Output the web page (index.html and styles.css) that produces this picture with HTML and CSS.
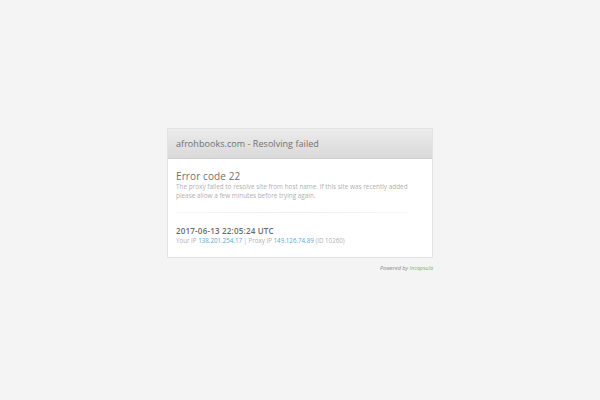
FILE: index.html
```html
<!DOCTYPE html>
<html>
<head>
<meta charset="utf-8">
<link rel="stylesheet" href="styles.css">
</head>
<body>
<div class="wrap">
  <div class="card">
    <div class="head">afrohbooks.com - Resolving failed</div>
    <div class="body">
      <div class="title">Error code 22</div>
      <div class="desc">The proxy failed to resolve site from host name. If this site was recently added please allow a few minutes before trying again.</div>
      <div class="divider"></div>
      <div class="date">2017-06-13 22:05:24 UTC</div>
      <div class="ip">Your IP <a>138.201.254.17</a> | Proxy IP <a>149.126.74.89</a> (ID 10260)</div>
    </div>
  </div>
  <div class="powered">Powered by <a class="inc">Incapsula</a></div>
</div>
</body>
</html>
```
FILE: styles.css
```css
html, body { margin: 0; padding: 0; }
body { background: #f4f4f4; width: 600px; height: 400px; font-family: "Open Sans", sans-serif; }
.wrap { width: 266px; margin: 0 auto; padding-top: 128px; }
.card { background: #fff; border: 1px solid #e3e3e3; box-sizing: border-box; }
.head { height: 30px; box-sizing: border-box; background: linear-gradient(#ececec, #d9d9d9); color: #707070; font-size: 9px; line-height: 30px; padding-left: 8px; border-bottom: 1px solid #d0d0d0; letter-spacing: 0.05px; }
.body { padding: 11px 8px 12px 8px; }
.title { font-size: 10px; color: #707070; line-height: 13px; letter-spacing: 0.1px; }
.desc { font-size: 6.4px; color: #b0b0b0; line-height: 9px; margin-top: -1px; }
.divider { height: 1px; margin: 12px 0 13px; background: linear-gradient(90deg, rgba(235,235,235,0.3), #ececec 50%, rgba(235,235,235,0.3)); width: 233px; }
.date { font-size: 8px; color: #6a6a6a; font-weight: 600; line-height: 10px; letter-spacing: 0.2px; }
.ip { font-size: 6.2px; color: #b0b0b0; line-height: 9px; }
.ip a { color: #5ba8d4; }
.powered { text-align: right; font-size: 5.5px; font-style: italic; color: #888; margin-top: 6px; }
.inc { color: #7dc040; }
```
